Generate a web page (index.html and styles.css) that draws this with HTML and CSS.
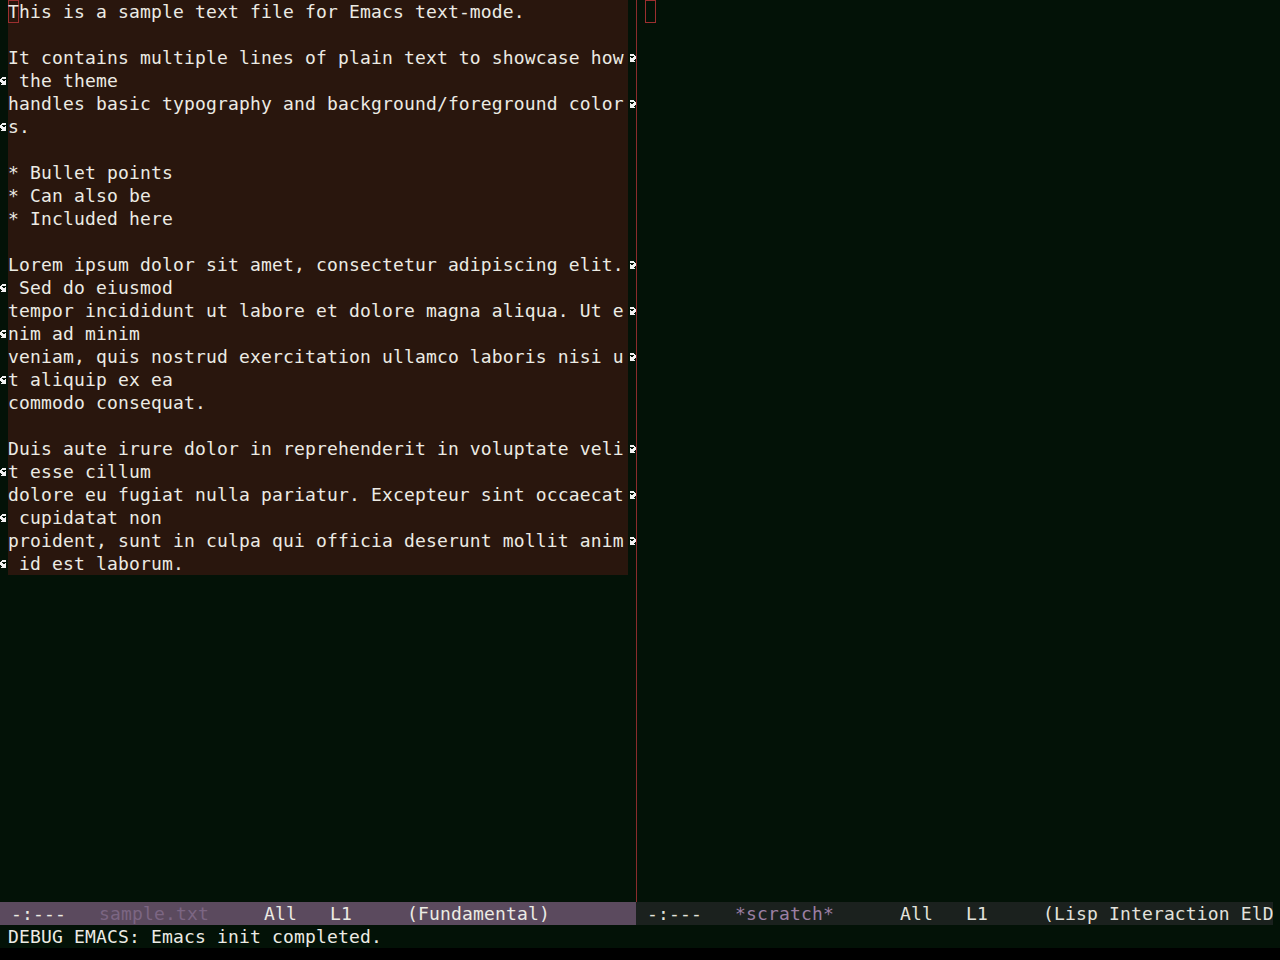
FILE: index.html
```html
<!DOCTYPE html>
<html>
<head>
<meta charset="utf-8">
<title>Emacs</title>
<link rel="stylesheet" href="styles.css">
</head>
<body>
<div class="frame">
  <div class="windows">
    <div class="win-left">
      <div class="row"><div class="fringe"></div><div class="txt"><span class="cursor">T</span>his is a sample text file for Emacs text-mode.</div><div class="fringe"></div></div>
      <div class="row"><div class="fringe"></div><div class="txt"></div><div class="fringe"></div></div>
      <div class="row"><div class="fringe"></div><div class="txt">It contains multiple lines of plain text to showcase how</div><div class="fringe"><svg class="arr" width="8" height="8" viewBox="0 0 8 8"><path d="M2 0h4v1H2z M2 1h5v1H2z M6 2h2v1H6z M2 3h1v1H2z M5 3h3v1H5z M2 4h6v1H2z M2 5h5v1H2z M2 6h4v1H2z M2 7h5v1H2z"/></svg></div></div>
      <div class="row"><div class="fringe"><svg class="arr" width="8" height="8" viewBox="0 0 8 8"><path d="M2 0h4v1H2z M1 1h5v1H1z M0 2h2v1H0z M0 3h3v1H0z M5 3h1v1H5z M0 4h6v1H0z M1 5h5v1H1z M2 6h4v1H2z M1 7h5v1H1z"/></svg></div><div class="txt"> the theme</div><div class="fringe"></div></div>
      <div class="row"><div class="fringe"></div><div class="txt">handles basic typography and background/foreground color</div><div class="fringe"><svg class="arr" width="8" height="8" viewBox="0 0 8 8"><path d="M2 0h4v1H2z M2 1h5v1H2z M6 2h2v1H6z M2 3h1v1H2z M5 3h3v1H5z M2 4h6v1H2z M2 5h5v1H2z M2 6h4v1H2z M2 7h5v1H2z"/></svg></div></div>
      <div class="row"><div class="fringe"><svg class="arr" width="8" height="8" viewBox="0 0 8 8"><path d="M2 0h4v1H2z M1 1h5v1H1z M0 2h2v1H0z M0 3h3v1H0z M5 3h1v1H5z M0 4h6v1H0z M1 5h5v1H1z M2 6h4v1H2z M1 7h5v1H1z"/></svg></div><div class="txt">s.</div><div class="fringe"></div></div>
      <div class="row"><div class="fringe"></div><div class="txt"></div><div class="fringe"></div></div>
      <div class="row"><div class="fringe"></div><div class="txt">* Bullet points</div><div class="fringe"></div></div>
      <div class="row"><div class="fringe"></div><div class="txt">* Can also be</div><div class="fringe"></div></div>
      <div class="row"><div class="fringe"></div><div class="txt">* Included here</div><div class="fringe"></div></div>
      <div class="row"><div class="fringe"></div><div class="txt"></div><div class="fringe"></div></div>
      <div class="row"><div class="fringe"></div><div class="txt">Lorem ipsum dolor sit amet, consectetur adipiscing elit.</div><div class="fringe"><svg class="arr" width="8" height="8" viewBox="0 0 8 8"><path d="M2 0h4v1H2z M2 1h5v1H2z M6 2h2v1H6z M2 3h1v1H2z M5 3h3v1H5z M2 4h6v1H2z M2 5h5v1H2z M2 6h4v1H2z M2 7h5v1H2z"/></svg></div></div>
      <div class="row"><div class="fringe"><svg class="arr" width="8" height="8" viewBox="0 0 8 8"><path d="M2 0h4v1H2z M1 1h5v1H1z M0 2h2v1H0z M0 3h3v1H0z M5 3h1v1H5z M0 4h6v1H0z M1 5h5v1H1z M2 6h4v1H2z M1 7h5v1H1z"/></svg></div><div class="txt"> Sed do eiusmod</div><div class="fringe"></div></div>
      <div class="row"><div class="fringe"></div><div class="txt">tempor incididunt ut labore et dolore magna aliqua. Ut e</div><div class="fringe"><svg class="arr" width="8" height="8" viewBox="0 0 8 8"><path d="M2 0h4v1H2z M2 1h5v1H2z M6 2h2v1H6z M2 3h1v1H2z M5 3h3v1H5z M2 4h6v1H2z M2 5h5v1H2z M2 6h4v1H2z M2 7h5v1H2z"/></svg></div></div>
      <div class="row"><div class="fringe"><svg class="arr" width="8" height="8" viewBox="0 0 8 8"><path d="M2 0h4v1H2z M1 1h5v1H1z M0 2h2v1H0z M0 3h3v1H0z M5 3h1v1H5z M0 4h6v1H0z M1 5h5v1H1z M2 6h4v1H2z M1 7h5v1H1z"/></svg></div><div class="txt">nim ad minim</div><div class="fringe"></div></div>
      <div class="row"><div class="fringe"></div><div class="txt">veniam, quis nostrud exercitation ullamco laboris nisi u</div><div class="fringe"><svg class="arr" width="8" height="8" viewBox="0 0 8 8"><path d="M2 0h4v1H2z M2 1h5v1H2z M6 2h2v1H6z M2 3h1v1H2z M5 3h3v1H5z M2 4h6v1H2z M2 5h5v1H2z M2 6h4v1H2z M2 7h5v1H2z"/></svg></div></div>
      <div class="row"><div class="fringe"><svg class="arr" width="8" height="8" viewBox="0 0 8 8"><path d="M2 0h4v1H2z M1 1h5v1H1z M0 2h2v1H0z M0 3h3v1H0z M5 3h1v1H5z M0 4h6v1H0z M1 5h5v1H1z M2 6h4v1H2z M1 7h5v1H1z"/></svg></div><div class="txt">t aliquip ex ea</div><div class="fringe"></div></div>
      <div class="row"><div class="fringe"></div><div class="txt">commodo consequat.</div><div class="fringe"></div></div>
      <div class="row"><div class="fringe"></div><div class="txt"></div><div class="fringe"></div></div>
      <div class="row"><div class="fringe"></div><div class="txt">Duis aute irure dolor in reprehenderit in voluptate veli</div><div class="fringe"><svg class="arr" width="8" height="8" viewBox="0 0 8 8"><path d="M2 0h4v1H2z M2 1h5v1H2z M6 2h2v1H6z M2 3h1v1H2z M5 3h3v1H5z M2 4h6v1H2z M2 5h5v1H2z M2 6h4v1H2z M2 7h5v1H2z"/></svg></div></div>
      <div class="row"><div class="fringe"><svg class="arr" width="8" height="8" viewBox="0 0 8 8"><path d="M2 0h4v1H2z M1 1h5v1H1z M0 2h2v1H0z M0 3h3v1H0z M5 3h1v1H5z M0 4h6v1H0z M1 5h5v1H1z M2 6h4v1H2z M1 7h5v1H1z"/></svg></div><div class="txt">t esse cillum</div><div class="fringe"></div></div>
      <div class="row"><div class="fringe"></div><div class="txt">dolore eu fugiat nulla pariatur. Excepteur sint occaecat</div><div class="fringe"><svg class="arr" width="8" height="8" viewBox="0 0 8 8"><path d="M2 0h4v1H2z M2 1h5v1H2z M6 2h2v1H6z M2 3h1v1H2z M5 3h3v1H5z M2 4h6v1H2z M2 5h5v1H2z M2 6h4v1H2z M2 7h5v1H2z"/></svg></div></div>
      <div class="row"><div class="fringe"><svg class="arr" width="8" height="8" viewBox="0 0 8 8"><path d="M2 0h4v1H2z M1 1h5v1H1z M0 2h2v1H0z M0 3h3v1H0z M5 3h1v1H5z M0 4h6v1H0z M1 5h5v1H1z M2 6h4v1H2z M1 7h5v1H1z"/></svg></div><div class="txt"> cupidatat non</div><div class="fringe"></div></div>
      <div class="row"><div class="fringe"></div><div class="txt">proident, sunt in culpa qui officia deserunt mollit anim</div><div class="fringe"><svg class="arr" width="8" height="8" viewBox="0 0 8 8"><path d="M2 0h4v1H2z M2 1h5v1H2z M6 2h2v1H6z M2 3h1v1H2z M5 3h3v1H5z M2 4h6v1H2z M2 5h5v1H2z M2 6h4v1H2z M2 7h5v1H2z"/></svg></div></div>
      <div class="row"><div class="fringe"><svg class="arr" width="8" height="8" viewBox="0 0 8 8"><path d="M2 0h4v1H2z M1 1h5v1H1z M0 2h2v1H0z M0 3h3v1H0z M5 3h1v1H5z M0 4h6v1H0z M1 5h5v1H1z M2 6h4v1H2z M1 7h5v1H1z"/></svg></div><div class="txt"> id est laborum.</div><div class="fringe"></div></div>
    </div>
    <div class="divider"></div>
    <div class="win-right">
      <div class="row"><div class="fringe"></div><div class="txt-plain"><span class="cursor cursor-empty"></span></div></div>
    </div>
  </div>
  <div class="modelines">
    <div class="ml ml-active"> -:---   <span class="ml-buf">sample.txt</span>     All   L1     (Fundamental)</div>
    <div class="ml ml-inactive"> -:---   <span class="ml-buf2">*scratch*</span>      All   L1     (Lisp Interaction ElD</div>
  </div>
  <div class="minibuffer">DEBUG EMACS: Emacs init completed.</div>
</div>
</body>
</html>
```
FILE: styles.css
```css
html, body {
  margin: 0;
  padding: 0;
  background: #000000;
}

body {
  font-family: "DejaVu Sans Mono", "Liberation Mono", monospace;
  font-size: 18px;
  letter-spacing: 0.16px;
  color: #ecebe4;
}

.frame {
  width: 1280px;
  height: 948px;
  background: #031207;
  display: flex;
  flex-direction: column;
}

.windows {
  display: flex;
  height: 902px;
}

.win-left {
  width: 636px;
  flex: none;
}

.divider {
  width: 1px;
  flex: none;
  background: #8a2c2c;
}

.win-right {
  flex: 1;
}

.row {
  display: flex;
  height: 23px;
  line-height: 23px;
}

.fringe {
  width: 8px;
  flex: none;
}

.arr {
  display: block;
  margin-top: 8px;
  fill: #f2f2f2;
  shape-rendering: crispEdges;
}

.txt {
  width: 620px;
  flex: none;
  background: #29160d;
  white-space: pre;
}

.txt-plain {
  flex: 1;
  white-space: pre;
}

.cursor {
  display: inline-block;
  height: 23px;
  vertical-align: top;
  box-shadow: inset 0 0 0 1px #9c2f2f;
}

.cursor-empty {
  width: 11px;
}

.modelines {
  display: flex;
  height: 23px;
  line-height: 23px;
  white-space: pre;
}

.ml {
  flex: none;
  overflow: hidden;
}

.ml-active {
  width: 636px;
  background: #5b4a5e;
  color: #ecebe4;
}

.ml-buf {
  color: #7c6683;
}

.ml-inactive {
  width: 637px;
  background: #1b211e;
  color: #e2e2dc;
}

.ml-buf2 {
  color: #9b7fa3;
}

.minibuffer {
  height: 23px;
  line-height: 23px;
  padding-left: 8px;
  white-space: pre;
  color: #ecebe4;
}
```
